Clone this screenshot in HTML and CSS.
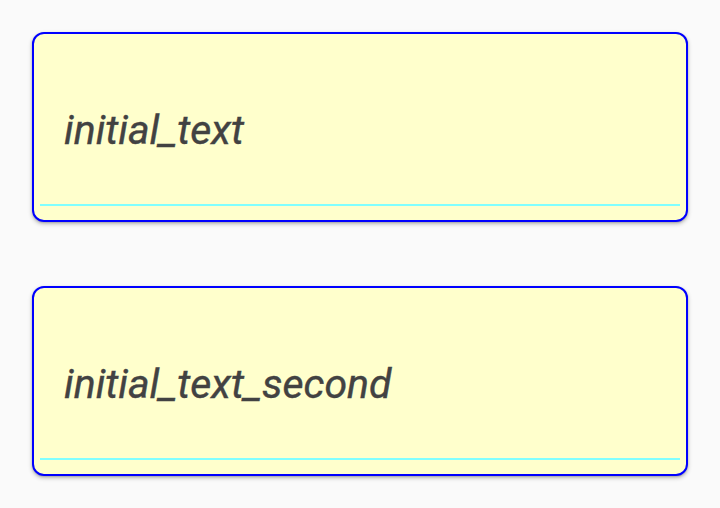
FILE: index.html
```html
<!DOCTYPE html>
<html>
<head>
<meta charset="utf-8">
<link rel="stylesheet" href="styles.css">
</head>
<body>
<div class="list">
  <div class="card">
    <div class="field"><span class="text">initial_text</span></div>
    <div class="line"></div>
  </div>
  <div class="card">
    <div class="field"><span class="text">initial_text_second</span></div>
    <div class="line"></div>
  </div>
</div>
</body>
</html>
```
FILE: styles.css
```css
html, body {
  margin: 0;
  padding: 0;
  background: #fafafa;
  width: 720px;
  height: 508px;
  overflow: hidden;
}
.list {
  display: flex;
  flex-direction: column;
  gap: 64px;
  padding: 32px 32px 0 32px;
}
.card {
  box-sizing: border-box;
  height: 190px;
  border: 2px solid #0000ff;
  border-radius: 12px;
  background: #ffffcc;
  box-shadow: 0 2px 4px rgba(0,0,0,0.25), 0 1px 2px rgba(0,0,0,0.15);
  display: flex;
  flex-direction: column;
  padding: 0 6px 14px 6px;
}
.field {
  flex: 1;
  display: flex;
  align-items: center;
  padding-left: 24px;
  padding-top: 22px;
}
.text {
  font-family: Roboto, "Noto Sans", sans-serif;
  font-style: italic;
  font-weight: 400;
  font-size: 41px;
  color: #424242;
  line-height: 1;
  -webkit-text-stroke: 0.4px #424242;
}
.line {
  height: 2px;
  background: #80ffff;
}
```
